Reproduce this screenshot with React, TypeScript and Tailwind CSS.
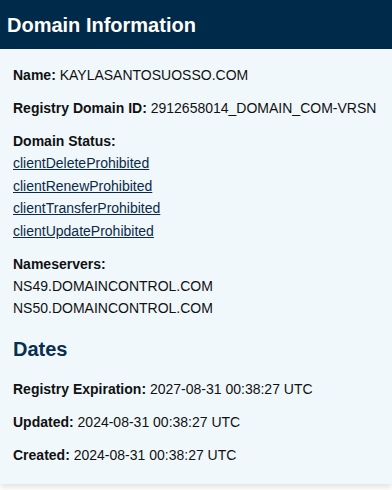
const statuses = [
  'clientDeleteProhibited',
  'clientRenewProhibited',
  'clientTransferProhibited',
  'clientUpdateProhibited',
]

const nameservers = ['NS49.DOMAINCONTROL.COM', 'NS50.DOMAINCONTROL.COM']

const dates = [
  { label: 'Registry Expiration', value: '2027-08-31 00:38:27 UTC' },
  { label: 'Updated', value: '2024-08-31 00:38:27 UTC' },
  { label: 'Created', value: '2024-08-31 00:38:27 UTC' },
]

export default function App() {
  return (
    <div className="min-h-screen bg-white font-['Liberation_Sans',Arial,sans-serif]">
      <div className="bg-[#f0f8fc] shadow-[0_3px_6px_rgba(0,0,0,0.12)]">
        {/* Header */}
        <div className="h-[49px] bg-[#002a4a] flex items-center px-[7px]">
          <h1 className="text-[20px] font-bold text-white leading-none">Domain Information</h1>
        </div>

        <div className="px-[13px] pt-[15px] pb-[6.5px] text-[14px] leading-[22.4px] text-[#111]">
          <p className="mb-[10.6px]">
            <strong>Name:</strong> KAYLASANTOSUOSSO.COM
          </p>
          <p className="mb-[10.6px]">
            <strong>Registry Domain ID:</strong> 2912658014_DOMAIN_COM-VRSN
          </p>

          <div className="mb-[10.6px]">
            <p><strong>Domain Status:</strong></p>
            {statuses.map(s => (
              <div key={s}>
                <a href="#" className="underline text-[#0b2a48]">{s}</a>
              </div>
            ))}
          </div>

          <div className="mb-[10.6px]">
            <p><strong>Nameservers:</strong></p>
            {nameservers.map(ns => (
              <div key={ns}>{ns}</div>
            ))}
          </div>

          {/* Dates */}
          <h2 className="mt-[17px] mb-[17px] text-[20px] leading-[24px] font-bold text-[#0a2e4f]">Dates</h2>
          {dates.map(d => (
            <p key={d.label} className="mb-[10.8px]">
              <strong>{d.label}:</strong> {d.value}
            </p>
          ))}
        </div>
      </div>
    </div>
  )
}
